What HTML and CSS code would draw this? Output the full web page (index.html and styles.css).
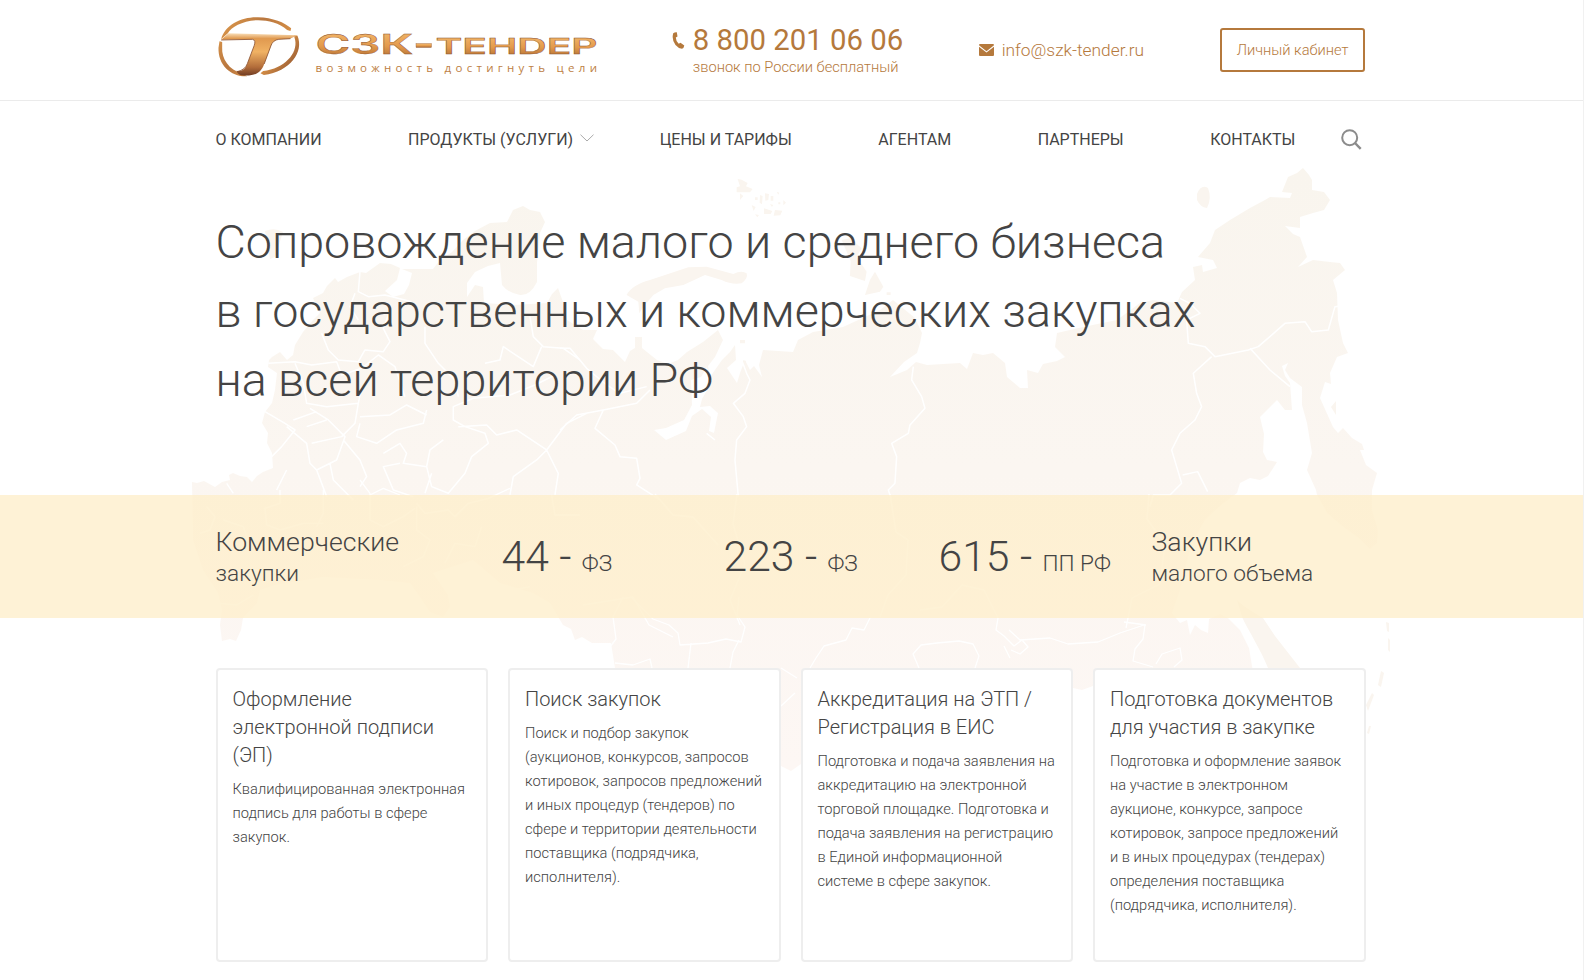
FILE: index.html
```html
<!DOCTYPE html>
<html lang="ru">
<head>
<meta charset="utf-8">
<title>СЗК-Тендер</title>
<link rel="stylesheet" href="styles.css">
</head>
<body>
<div class="page">
<svg class="map" viewBox="0 0 1583 980" width="1583" height="980" aria-hidden="true">
  <defs>
    <linearGradient id="land" gradientUnits="userSpaceOnUse" x1="0" y1="170" x2="0" y2="770">
      <stop offset="0" stop-color="#f9f5ee"/><stop offset=".5" stop-color="#fbf6f1"/><stop offset="1" stop-color="#fdf7f4"/>
    </linearGradient>
  </defs>
  <path fill="url(#land)" d="M192 482L197 483 204 481 215 487 222 482 230 480 229 475 233 473 240 476 247 477 252 482 257 476 263 472 273 468 272 453 267 443 268 433 262 423 265 412 272 403 275 390 277 373 268 367 269 360 272 357 280 352 287 360 293 355 295 345 303 332 313 320 320 313 313 298 323 293 327 286 335 278 338 282 347 277 360 272 366 273 380 263 391 264 400 268 397 280 385 291 393 297 404 294 409 285 412 273 402 269 433 269 440 260 452 252 463 240 475 231 490 223 507 222 513 210 523 206 530 210 540 212 545 222 540 233 537 263 537 282 Q530 296 520 295 Q508 293 502 285L500 263 488 266 475 272 467 283 467 297 475 285 483 287 484 303 513 305 547 303 552 294 558 288 563 302 567 320 583 330 597 330 593 339 603 349 613 350 625 362 630 351 635 348 635 337 642 337 642 348 657 360 668 364 678 360 687 352 703 342 718 330 723 340 715 357 708 366 710 377 722 360 730 352 735 345 736 360 727 368 737 383 740 373 745 360 750 370 754 366 762 377 759 365 763 350 793 352 798 340 813 332 843 327 880 310 893 300 915 318 922 333 920 343 917 353 904 362 890 377 907 370 916 362 927 365 960 363 967 369 973 353 983 355 993 353 1005 363 1007 377 1020 388 1028 388 1027 370 1038 373 1043 364 1057 361 1065 357 1055 347 1057 333 1083 327 1117 320 1140 303 1153 300 1177 303 1182 292 1195 280 1193 267 1202 265 1203 272 1217 268 1213 260 1198 257 1210 243 1215 230 1230 220 1250 208 1265 200 1270 197 1290 198 1292 193 1282 192 1288 177 1297 173 1303 168 1309 175 1312 180 1312 190 1324 192 1330 200 1324 210 1313 213 1300 217 1300 228 1285 226 1293 234 1300 237 1307 257 1298 267 1313 260 1330 262 1340 263 1345 270 1333 280 1337 293 1338 320 1343 343 1348 353 1337 357 1330 373 1331 384 1325 382 1320 398 1333 427 1338 433 1343 428 1352 438 1362 444 1364 450 1360 450 1366 465 1377 473 1372 490 1372 510 1378 530 1377 543 1370 549 1360 539 1342 526 1327 513 1317 495 1316 490 1307 470 1312 453 1307 423 1302 405 1302 387 1290 378 1285 370 1288 363 1282 366 1285 376 1290 383 1292 410 1285 410 1277 400 1260 417 1264 434 1263 452 1267 460 1277 462 1268 476 1260 480 1250 478 1240 483 1237 493 1220 506 1205 520 1191 545 1180 590 1172 613 1180 623 1187 620 1190 635 1195 625 1201 630 1208 633 1209 619 1220 614 1228 618 1240 630 1249 648 1253 672 1230 690 1093 686 1082 690 1073 688 900 720 815 770 801 764 791 771 781 766 640 700 615 668 611 643 592 643 582 637 575 640 571 629 563 625 550 603 533 593 500 583 473 560 433 573 448 595 450 607 443 617 430 612 420 597 410 583 380 580 323 577 275 585 260 590 257 603 243 618 241 630 236 641 230 639 222 641 220 625 222 610 218 593 203 570 193 540Z"/>
  <g fill="#faf5ef">
    <path d="M1237 600C1245 608 1257 614 1263 618L1275 636 1300 668 1268 668C1261 650 1248 630 1242 617Z"/>
    <path d="M1197 194q4-10 11-6q4 10-1 20q-7-1-10-8z"/>
    <path d="M265 231q10-4 18 1l-8 25-5 2z"/>
    <path d="M1331 407l5-6v14z"/>
    <path d="M1386 622l3 1 0 9-2-1zM1388 638l2 2 0 12-2-2zM1381 671l3 2-3 14-3-2zM1372 693l2 2-6 16-2-6zM1369 726h2l-2 8-2-1z"/>
    <g transform="translate(560 160) scale(.3333)">
      <path d="M200 405Q215 375 270 360L385 322 440 320 520 342Q545 330 560 340 565 355 545 370 515 375 485 360L435 345 370 375 315 385 280 405 250 440 238 460 235 425Z"/>
      <path d="M845 240l25-5 35 30-15 25 30 45-5 28-45-15 2-45zM945 335l25 45-10 15-45 10 15-45zM980 397h12v8h-12z"/>
      <path d="M533 57l12 2 18 10-5 10 20 8-8 10h-40v-15l10-3zM540 100l10 8-10 12zM575 135l12 6-6 12zM585 112h8v8h-8zM600 105l8 3-2 25-7-5zM615 100l12 2-2 18-9 2zM632 108h8v14h-8zM650 95l8 3-3 6zM670 120l8 8-8 8zM655 127h6v6h-6zM612 145l25 8-5 9h-20zM645 150l22 2-6 14-20 1zM585 163l12 2-5 7zM630 132l10 3-4 6z"/>
      <path d="M550 600l8 4-2 10-8-2zM540 540h15v10h-15z"/>
    </g>
  </g>
  <path fill="#fff" d="M691 380l10-3 6-10 3 18-8 14-2 8 10-1 8 7-4 20-5-2 2-14-9-8-10 7-6 15-20 9-12-10 12-2 18-8 8-15z"/>
  <g fill="none" stroke="#fff" stroke-width="1.3" stroke-linejoin="round">
    <g transform="translate(180 160) scale(.3333)" stroke-width="4.5">
      <path d="M540 335l-5 60 30 15 50-5 80 20M525 400l-15 40 25 40M425 520l20 50 30 30 60 5 20-35 55 5 20-30-20-40 15-40M735 500l0 50 40 60 50 50 10 50M265 610l80-5 50 10 75-10 15 40 60-20 50-40 50 35 30 90M345 610l25 60 10 60 60 10 95-10 10-50M255 755l60 35 30 20-40 50-30 30M340 780l70-25M380 800l60-20M320 800l60 50 10 60 20 20 60-30 25-70-50-50-55-35M395 850l90-20 40-40 10-60M490 840l50 60 20 50-20 30M540 770l90-5 50-30 60 30M540 790l-10 40 60 20 60-40 80-20 10-40M610 880l50-30 20 30-10 30 70 10 10-50 40-30M660 910l-50 10 30 70 60 20M740 920l15 60 50 20 50-60 20-50 50-40-10-30-60-20-35-20 0-40 60-25 110-10 75-30 60-30M835 800l85-5 30 30 60-15 90 60 60-80 60-30M1100 870l-30 30-70 50-10 55M1100 870l35 70-10 65M1050 470l10 60 30 30 60 5 50 35M1085 560l-25 60-90-60-10 40-45 10M450 910l10 50 60 60M320 930l-30 60M410 930l30 80M755 940l-20 60"/>
    </g>
    <g transform="translate(180 480) scale(.3333)" stroke-width="4">
      <path d="M140 10l20 30M300 30l0 40-45 15 5 50 40 15 70-20 60 0M430 30l0 70-20 40M540 0l30 40 0 80 40 20 60-30 35-25M570 45l40-20 50 20M710 70l25 30 70-10 20 20 40-40 60-15 65-30M710 80l0 70 40 30-20 50-60 30M1115 45l10 60 75 0M905 140l-20 60-60-10-30 60M80 80l25 30-15 40-30 10M130 120l60 20 20 60M120 370l50 5 50-30M1000 330l50-10"/>
    </g>
    <g transform="translate(560 160) scale(.3333)" stroke-width="4.5">
      <path d="M0 565h30l50 60 60 50 40 25 80-20M0 810l50-45 80-15 100-20 40-40M130 750l-25 55 60 50 15 35 50 5 10 60-10 20 70 45M545 600l15 40 10 20-15 40-35 30 30 40 10 30-30 40-5 60 10 110M1060 620l-5 40 30 50 10 35-45 50-5 25-50 30 15 40-5 80-20 20 10 30M440 820l25 20"/>
    </g>
    <g transform="translate(960 160) scale(.3333)" stroke-width="4.5">
      <path d="M660 415l30 15 30 30-40 20 5 70 50 10 30 30 100-20 30-10 80-70 60-5 20 30 50-5 20-70 40-5M870 565l60 65 60 50M755 590l-55 50 10 60 15 40-20 40-45 40-25 50 30 100-35 35-50 0-10 35M668 945l45-10 30 60"/>
    </g>
    <path d="M655 494l18 21 20 2 25 28M737 494l-4 30 12 40-15 36 10 25M890 494l6 38 12 8-2 35-18 20-8 22M920 610l22-3 20-22 22 5 14 28M1149 494l-2 25 18 25-5 40-28 14-6 30"/>
    <path d="M583 605l50-8 16 28 24 12M600 668l4-13 12-16-3-22 10-20"/>
    <path d="M631 597l22 22 16 6 9 8 2 12 28-2 18-4 15 3 4-15-8-12 2-18M691 643l-3 25M739 640l-6 12-3 16M615 663l18 2 17-6 2 9"/>
    <path d="M870 618l-6 12-12-2-6 12-22 6-8 12-6 10M919 668l-6-14 8-9 16-2 22-2 14 3 6 12-4 12M998 618l-2 12 8 6 10 10 8-6 6 7-8 7-9-4M1009 630l11 10 30-2 18 6 30-2 22-9 24-8M1145 625l-2 14-8 10-2 12 20 6M1156 664l6-10 18-6 2 12-8 7M1004 646l6 12M1124 622l22 3"/>
    <path d="M781 706l14-13M781 668l16 10"/>
  </g>
</svg>

<header class="top">
  <div class="wrap top-row">
    <a class="logo">
      <svg width="390" height="76" viewBox="210 10 390 76">
        <defs>
          <linearGradient id="gold" x1="0" y1="0" x2="0" y2="1">
            <stop offset="0" stop-color="#f6bd70"/><stop offset=".55" stop-color="#e39a4c"/><stop offset="1" stop-color="#a8662f"/>
          </linearGradient>
          <linearGradient id="goldArc" gradientUnits="userSpaceOnUse" x1="20" y1="20" x2="250" y2="200">
            <stop offset="0" stop-color="#e5a04e"/><stop offset=".4" stop-color="#b9773f"/><stop offset=".7" stop-color="#d68f46"/><stop offset="1" stop-color="#8a4f2e"/>
          </linearGradient>
          <linearGradient id="goldStem" gradientUnits="userSpaceOnUse" x1="0" y1="66" x2="0" y2="198">
            <stop offset="0" stop-color="#fff0d4"/><stop offset=".15" stop-color="#e0994f"/><stop offset=".45" stop-color="#f0b264"/><stop offset=".8" stop-color="#b26c3a"/><stop offset="1" stop-color="#6d3a22"/>
          </linearGradient>
        </defs>
        <g transform="translate(210.500 10) scale(.3333)">
          <path fill="url(#goldArc)" d="M32 88C42 45 95 20 142 22 188 23 222 38 242 55L240 63 230 60C205 38 170 30 138 31 95 33 62 52 52 70Z"/>
          <path fill="url(#goldArc)" d="M27 94L35 96 35 113C33 145 55 180 95 190L110 199C62 201 22 165 24 113Z"/>
          <path fill="url(#goldArc)" d="M250 76L261 77C281 125 240 184 160 195L150 190 158 183C222 176 262 130 254 90Z"/>
          <path fill="url(#goldStem)" d="M32 89L54 70 262 76 238 86 205 88C188 91 183 101 180 112L161 162C152 190 130 200 92 196 84 193 80 188 78 182 94 186 105 178 111 160L131 107C134 97 137 91 126 88Z"/>
          <path fill="none" stroke="#8a5030" stroke-width="2.5" d="M32 90L126 88Q137 90 131 107L111 160Q104 180 80 185M161 162L181 108Q187 90 205 88L240 86"/>
        </g>
        <g class="logo-name" fill="url(#gold)" stroke="#8d5230" stroke-width=".35">
          <text x="315.500" y="54" font-size="27" textLength="98" lengthAdjust="spacingAndGlyphs">СЗК</text>
          <rect x="416" y="43.500" width="15.500" height="4"/>
          <text x="435.500" y="54" font-size="21.500" textLength="162" lengthAdjust="spacingAndGlyphs">ТЕНDЕР</text>
        </g>
        <text class="logo-slogan" x="315.500" y="72" textLength="281.500" lengthAdjust="spacing">возможность достигнуть цели</text>
      </svg>
    </a>
    <div class="phone">
      <svg class="phone-icon" width="13" height="17" viewBox="0 0 13 17"><path fill="#b5793c" d="M1.200 1.200Q3 0 4.800.3L5.500 4.600 3.800 5.600Q3.900 9.300 6.700 11.800L8.500 10.800 12.300 13.400Q12 15.800 10 16.700 6.500 16.600 3.500 13 -.6 7.600 1.200 1.200Z"/></svg>
      <div>
        <div class="phone-num">8 800 201 06 06</div>
        <div class="phone-note">звонок по России бесплатный</div>
      </div>
    </div>
    <div class="mail">
      <svg width="15" height="12" viewBox="0 0 15 12"><path fill="#b5793c" d="M1 0H14Q15 0 15 1.300L7.500 7.300 0 1.300Q0 0 1 0ZM0 2.700L7.500 8.500 15 2.700V11Q15 12 14 12H1Q0 12 0 11Z"/></svg>
      <span>info@szk-tender.ru</span>
    </div>
    <a class="cabinet">Личный кабинет</a>
  </div>
</header>

<nav class="wrap nav">
  <div class="nav-items">
    <a>О КОМПАНИИ</a>
    <a class="has-sub">ПРОДУКТЫ (УСЛУГИ)<svg class="chevron" width="14" height="8" viewBox="0 0 14 8"><path d="M.5.700L7 7 13.500.700" fill="none" stroke="#aaa"/></svg></a>
    <a>ЦЕНЫ И ТАРИФЫ</a>
    <a>АГЕНТАМ</a>
    <a>ПАРТНЕРЫ</a>
    <a>КОНТАКТЫ</a>
  </div>
  <svg class="search" width="21" height="21" viewBox="0 0 21 21"><circle cx="8.700" cy="8.700" r="7.500" fill="none" stroke="#8c8c8c" stroke-width="2"/><path d="M14 14L19.700 19.900" stroke="#8c8c8c" stroke-width="2.400"/></svg>
</nav>

<main>
  <h1 class="wrap">Сопровождение малого и среднего бизнеса<br>в государственных и коммерческих закупках<br>на всей территории РФ</h1>
  <section class="band">
    <div class="wrap laws">
      <div class="kind"><b>Коммерческие</b><span>закупки</span></div>
      <div class="law">44 - <small>ФЗ</small></div>
      <div class="law">223 - <small>ФЗ</small></div>
      <div class="law">615 - <small>ПП РФ</small></div>
      <div class="kind"><b>Закупки</b><span>малого объема</span></div>
    </div>
  </section>
  <section class="wrap cards">
    <article><h2>Оформление<br>электронной подписи<br>(ЭП)</h2><p>Квалифицированная электронная<br>подпись для работы в сфере<br>закупок.</p></article>
    <article><h2>Поиск закупок</h2><p>Поиск и подбор закупок<br>(аукционов, конкурсов, запросов<br>котировок, запросов предложений<br>и иных процедур (тендеров) по<br>сфере и территории деятельности<br>поставщика (подрядчика,<br>исполнителя).</p></article>
    <article><h2>Аккредитация на ЭТП /<br>Регистрация в ЕИС</h2><p>Подготовка и подача заявления на<br>аккредитацию на электронной<br>торговой площадке. Подготовка и<br>подача заявления на регистрацию<br>в Единой информационной<br>системе в сфере закупок.</p></article>
    <article><h2>Подготовка документов<br>для участия в закупке</h2><p>Подготовка и оформление заявок<br>на участие в электронном<br>аукционе, конкурсе, запросе<br>котировок, запросе предложений<br>и в иных процедурах (тендерах)<br>определения поставщика<br>(подрядчика, исполнителя).</p></article>
  </section>
</main>
</div>
</body>
</html>
```
FILE: styles.css
```css
* { box-sizing: border-box; }
html, body { margin: 0; height: 100%; overflow: hidden; }
body { background: #fff; color: #444; font-family: Roboto, sans-serif; font-weight: 300; }
.page { position: relative; height: 980px; border-right: 1px solid #f1f1f1; }
.map { position: absolute; left: 0; top: 0; z-index: -1; }
.wrap { width: 1150px; margin: 0 0 0 215.5px; white-space: nowrap; }

.top { height: 101px; border-bottom: 1px solid #ebebeb; }
.top-row { display: flex; color: #b5793c; }
.logo { width: 456.5px; padding-top: 10px; margin-left: -5.5px; }
.logo svg { display: block; }
.logo-name { font-family: Inter, sans-serif; font-weight: 600; }
.logo-slogan { font-family: "Open Sans", sans-serif; font-size: 11.5px; font-weight: 400; fill: #bd8044; }
.phone { display: flex; gap: 8px; width: 312.5px; padding: 22px 0 0 5.5px; }
.phone-icon { margin-top: 10px; }
.phone-num { font-size: 22pt; line-height: 36px; font-weight: 400; }
.phone-note { font-size: 11pt; line-height: 18px; }
.mail { display: flex; align-items: center; gap: 8px; height: 44px; margin-top: 28px; width: 241px; font-size: 13pt; }
.cabinet { margin-top: 28px; width: 146px; height: 44px; border: 2px solid #b5793c; border-radius: 3px; font-size: 11pt; line-height: 40px; text-align: center; }

.nav { display: flex; align-items: center; height: 77px; }
.nav-items { display: flex; justify-content: space-between; width: 1080px; font-size: 12pt; font-weight: 400; color: #444; }
.has-sub { position: relative; }
.chevron { position: absolute; left: calc(100% + 7px); top: 4px; }
.search { margin-left: 45px; }

h1 { padding-top: 30px; font-size: 35pt; line-height: 69px; font-weight: 300; }
.band { margin-top: 80px; height: 123px; background: rgba(254, 239, 204, .8); }
.laws { display: grid; grid-template-columns: 286px 222px 215px 213px 214px; align-items: center; height: 123px; }
.kind { padding-top: 3px; }
.kind b { display: block; font-size: 20pt; line-height: 31px; font-weight: 300; }
.kind span { display: block; font-size: 17pt; line-height: 31px; }
.law { padding-top: 6px; font-size: 32pt; line-height: 60px; }
.law small { font-size: 17pt; }

.cards { display: grid; grid-template-columns: repeat(4, minmax(0, 1fr)); gap: 20px; margin-top: 50px; }
article { height: 294px; padding: 15px 15px 0; border: 2px solid #eee; border-radius: 4px; background: #fff; }
h2 { margin: 0; font-size: 15pt; line-height: 28px; font-weight: 300; }
article p { margin: 8px 0 0; font-size: 11pt; line-height: 24px; }
```
